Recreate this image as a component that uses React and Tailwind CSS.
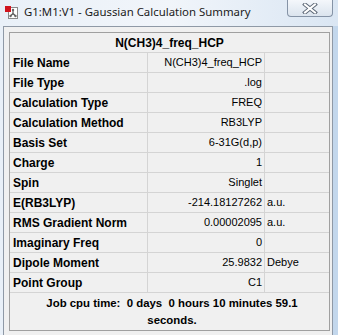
import React from "react";

const rows = [
  ["File Name", "N(CH3)4_freq_HCP", ""],
  ["File Type", ".log", ""],
  ["Calculation Type", "FREQ", ""],
  ["Calculation Method", "RB3LYP", ""],
  ["Basis Set", "6-31G(d,p)", ""],
  ["Charge", "1", ""],
  ["Spin", "Singlet", ""],
  ["E(RB3LYP)", "-214.18127262", "a.u."],
  ["RMS Gradient Norm", "0.00002095", "a.u."],
  ["Imaginary Freq", "0", ""],
  ["Dipole Moment", "25.9832", "Debye"],
  ["Point Group", "C1", ""],
];

function AppIcon() {
  return (
    <svg width="15" height="15" viewBox="0 0 15 15">
      <rect x="4.5" y="3.5" width="9" height="11" fill="#ffffff" stroke="#8a8a8a" />
      <line x1="9" y1="6" x2="9" y2="9.5" stroke="#555" strokeWidth="1.2" />
      <line x1="9" y1="9.5" x2="6.5" y2="12" stroke="#555" strokeWidth="1.2" />
      <line x1="9" y1="9.5" x2="11.5" y2="12" stroke="#555" strokeWidth="1.2" />
      <circle cx="9" cy="6" r="1.2" fill="#666" />
      <circle cx="6.5" cy="12" r="1.2" fill="#666" />
      <circle cx="11.5" cy="12" r="1.2" fill="#666" />
      <rect x="1" y="2" width="6" height="6" fill="#d0141e" />
    </svg>
  );
}

function CloseGlyph() {
  return (
    <svg width="16" height="11" viewBox="0 0 16 11">
      <path d="M3 1.5 L13 9.5 M13 1.5 L3 9.5" stroke="#5d6877" strokeWidth="4" strokeLinecap="square" />
      <path d="M3 1.5 L13 9.5 M13 1.5 L3 9.5" stroke="#ffffff" strokeWidth="2" strokeLinecap="square" />
    </svg>
  );
}

export default function App() {
  return (
    <div className="w-[338px] h-[335px] overflow-hidden bg-gradient-to-r from-[#e9f0f8] via-[#f1f5fa] to-[#dae6f3] text-black">
      {/* Title bar */}
      <div className="h-[26px] flex items-start">
        <div className="ml-[4px] mt-[4px]">
          <AppIcon />
        </div>
        <div
          className="ml-[5px] mt-[4px] text-[11.4px] leading-[16px] text-[#1b1b1b]"
          style={{ fontFamily: '"Noto Sans", sans-serif' }}
        >
          G1:M1:V1 - Gaussian Calculation Summary
        </div>
        <div className="ml-auto mr-[5px] w-[46px] h-[17px] border border-t-0 border-[#8593a6] rounded-b-[4px] bg-gradient-to-b from-[#f4f7fb] to-[#dbe4ee] flex items-center justify-center">
          <CloseGlyph />
        </div>
      </div>

      {/* Body */}
      <div className="flex h-[309px]">
        <div className="w-[3px]" />
        <div className="w-[330px] border border-b-0 border-[#8f99a6] bg-[#f0f0f0] pl-[5px] pt-[5px] pr-[2px]">
          <div
            className="border border-[#a0a0a0] bg-[#f0f0f0]"
            style={{ fontFamily: '"Liberation Sans", Arial, sans-serif' }}
          >
            <div className="h-[20px] border-b border-[#d4d4d4] flex items-center justify-center text-[12px] font-bold">
              N(CH3)4_freq_HCP
            </div>
            {rows.map(([label, value, unit]) => (
              <div key={label} className="h-[20px] border-b border-[#d4d4d4] flex">
                <div className="w-[138px] border-r border-[#d4d4d4] pl-[3px] flex items-center text-[12px] font-bold whitespace-nowrap">
                  {label}
                </div>
                <div className="w-[117px] border-r border-[#d4d4d4] pr-[2px] flex items-center justify-end text-[11px] whitespace-nowrap">
                  {value}
                </div>
                <div className="flex-1 pl-[2px] flex items-center text-[11px] whitespace-nowrap">
                  {unit}
                </div>
              </div>
            ))}
            <div className="h-[37px] pt-[2px] pl-[5px] text-[11.4px] font-bold leading-[17px] whitespace-pre text-center">
              <div>Job cpu time:  0 days  0 hours 10 minutes 59.1</div>
              <div>seconds.</div>
            </div>
          </div>
        </div>
        <div className="flex-1 bg-[#c3d7ec]" />
      </div>
    </div>
  );
}
